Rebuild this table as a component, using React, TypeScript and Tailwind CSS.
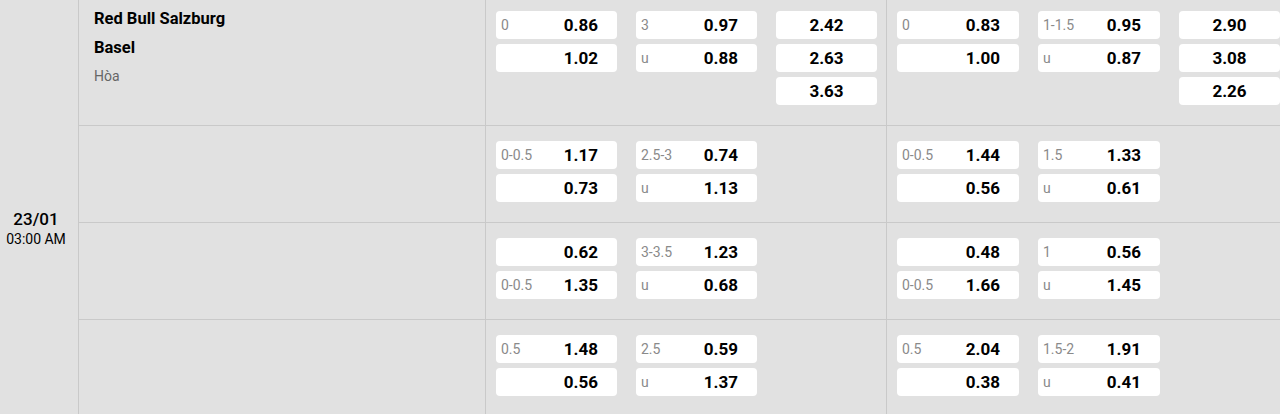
import React from "react";

type Pair = [string, string];
type Group = { a: Pair[]; b: Pair[]; c?: string[] };
type Row = { g1: Group; g2: Group };

const rows: Row[] = [
  {
    g1: { a: [["0", "0.86"], ["", "1.02"]], b: [["3", "0.97"], ["u", "0.88"]], c: ["2.42", "2.63", "3.63"] },
    g2: { a: [["0", "0.83"], ["", "1.00"]], b: [["1-1.5", "0.95"], ["u", "0.87"]], c: ["2.90", "3.08", "2.26"] },
  },
  {
    g1: { a: [["0-0.5", "1.17"], ["", "0.73"]], b: [["2.5-3", "0.74"], ["u", "1.13"]] },
    g2: { a: [["0-0.5", "1.44"], ["", "0.56"]], b: [["1.5", "1.33"], ["u", "0.61"]] },
  },
  {
    g1: { a: [["", "0.62"], ["0-0.5", "1.35"]], b: [["3-3.5", "1.23"], ["u", "0.68"]] },
    g2: { a: [["", "0.48"], ["0-0.5", "1.66"]], b: [["1", "0.56"], ["u", "1.45"]] },
  },
  {
    g1: { a: [["0.5", "1.48"], ["", "0.56"]], b: [["2.5", "0.59"], ["u", "1.37"]] },
    g2: { a: [["0.5", "2.04"], ["", "0.38"]], b: [["1.5-2", "1.91"], ["u", "0.41"]] },
  },
];

function OddBox({ label, value }: { label: string; value: string }) {
  return (
    <div className="flex h-[28px] items-center rounded-[4px] bg-white pl-[5px] pr-[19px]">
      <span className="text-[14px] leading-none text-[#8a8a8a]">{label}</span>
      <span className="ml-auto text-[17px] font-bold leading-none text-black">{value}</span>
    </div>
  );
}

function CenterBox({ value }: { value: string }) {
  return (
    <div className="flex h-[28px] items-center justify-center rounded-[4px] bg-white">
      <span className="text-[17px] font-bold leading-none text-black">{value}</span>
    </div>
  );
}

function GroupCell({ g, wide, last }: { g: Group; wide: boolean; last: boolean }) {
  return (
    <div
      className={
        last
          ? "flex shrink-0 gap-x-[19px] pl-[10px] pt-[15px] pb-[20px]"
          : "flex w-[401px] shrink-0 gap-x-[19px] border-r border-[#c9c9c9] pl-[10px] pr-[9px] pt-[15px] pb-[20px]"
      }
    >
      <div className={wide ? "flex w-[122px] flex-col gap-[5px]" : "flex w-[121px] flex-col gap-[5px]"}>
        {g.a.map((p, i) => (
          <OddBox key={i} label={p[0]} value={p[1]} />
        ))}
      </div>
      <div className={wide ? "flex w-[122px] flex-col gap-[5px]" : "flex w-[121px] flex-col gap-[5px]"}>
        {g.b.map((p, i) => (
          <OddBox key={i} label={p[0]} value={p[1]} />
        ))}
      </div>
      <div className="flex w-[101px] flex-col gap-[5px]">
        {g.c?.map((v, i) => (
          <CenterBox key={i} value={v} />
        ))}
      </div>
    </div>
  );
}

export default function App() {
  return (
    <div
      className="h-[414px] w-[1280px] overflow-hidden bg-[#e1e1e1] text-black"
      style={{ fontFamily: "Roboto, 'Noto Sans', Arial, sans-serif" }}
    >
      <div className="-mt-[4px] flex">
        <div className="flex w-[79px] shrink-0 flex-col items-center border-r border-[#c9c9c9] pr-[6px] pt-[213px]">
          <div className="text-[17px] font-medium leading-[20px]">23/01</div>
          <div className="text-[14px] leading-[20px]">03:00 AM</div>
        </div>
        <div className="flex flex-1 flex-col">
          {rows.map((r, i) => (
            <div key={i} className={i < rows.length - 1 ? "flex border-b border-[#c9c9c9]" : "flex"}>
              <div className="w-[407px] shrink-0 border-r border-[#c9c9c9] pl-[15px] pt-[8px]">
                {i === 0 && (
                  <>
                    <div className="text-[16.5px] font-bold leading-[29px]">Red Bull Salzburg</div>
                    <div className="text-[16.5px] font-bold leading-[29px]">Basel</div>
                    <div className="text-[14px] leading-[29px] text-[#666666]">Hòa</div>
                  </>
                )}
              </div>
              <GroupCell g={r.g1} wide={false} last={false} />
              <GroupCell g={r.g2} wide={true} last={true} />
            </div>
          ))}
        </div>
      </div>
    </div>
  );
}
